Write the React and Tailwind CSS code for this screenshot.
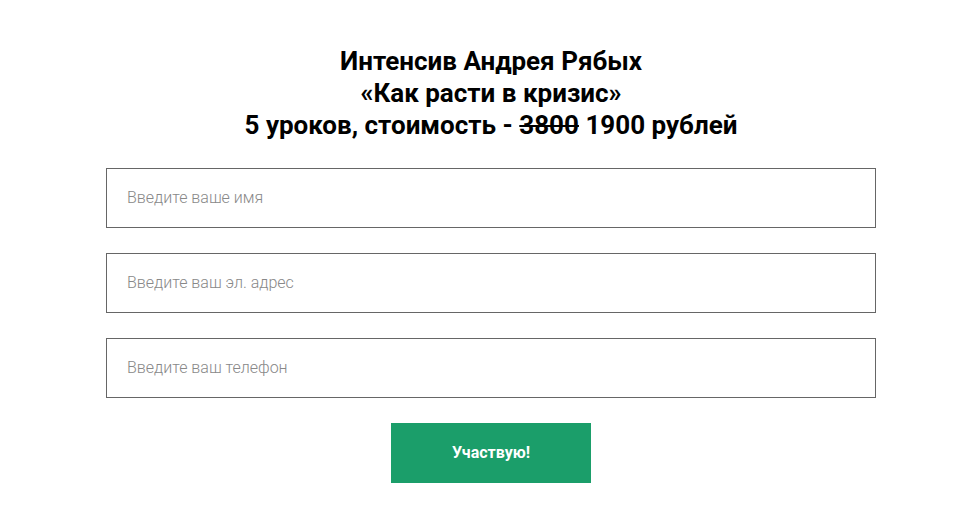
export default function App() {
  const fields = ['Введите ваше имя', 'Введите ваш эл. адрес', 'Введите ваш телефон']

  return (
    <div className="min-h-[508px] bg-white font-['Roboto',sans-serif]">
      <div className="ml-[106px] w-[770px] pt-[45px] flex flex-col items-center">
        {/* Heading */}
        <h1 className="text-center text-[26px] leading-[32px] font-bold text-black">
          Интенсив Андрея Рябых
          <br />
          «Как расти в кризис»
          <br />
          5 уроков, стоимость - <span className="line-through">3800</span> 1900 рублей
        </h1>

        {/* Form */}
        <form className="mt-[27px] w-full flex flex-col gap-[25px]" onSubmit={(e) => e.preventDefault()}>
          {fields.map((placeholder) => (
            <input
              key={placeholder}
              type="text"
              placeholder={placeholder}
              className="h-[60px] w-full border border-[#666666] px-[20px] pb-[1px] text-[16px] font-light text-[#333] placeholder:text-[#888888] outline-none"
            />
          ))}
          <div className="flex justify-center">
            <button
              type="submit"
              className="h-[60px] w-[200px] bg-[#1b9e6a] text-white text-[16px] font-bold"
            >
              Участвую!
            </button>
          </div>
        </form>
      </div>
    </div>
  )
}
